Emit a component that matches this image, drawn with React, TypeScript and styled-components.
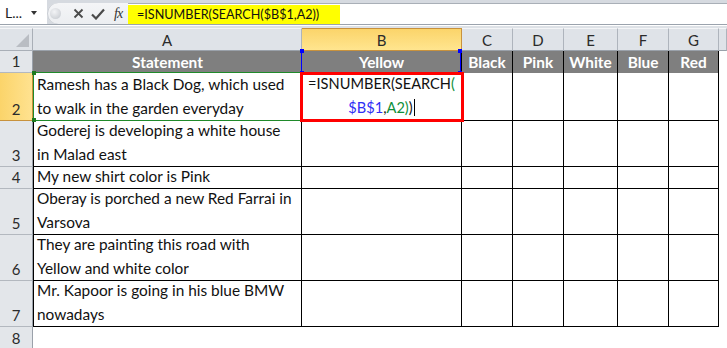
import styled, { createGlobalStyle } from "styled-components"

const GlobalStyle = createGlobalStyle`
  html, body {
    margin: 0;
    padding: 0;
    background: #ffffff;
  }
  body {
    width: 727px;
    height: 348px;
    overflow: hidden;
    font-family: Lato, "Open Sans", sans-serif;
  }
`

const Toolbar = styled.div`
  display: flex;
  height: 24px;
  background: #d6dae0;
  border-bottom: 1px solid #9ba3ad;
`

const ToolbarGap = styled.div`
  height: 2px;
  background: #dde1e6;
  border-top: 1px solid #ffffff;
`

const NameBox = styled.div`
  width: 47px;
  display: flex;
  align-items: center;
  justify-content: space-between;
  padding: 0 10px 0 5px;
  box-sizing: border-box;
  background: #ffffff;
  font-size: 14px;
  color: #1d1d1d;
`

const DropArrow = styled.span`
  width: 0;
  height: 0;
  border-left: 3px solid transparent;
  border-right: 3px solid transparent;
  border-top: 4px solid #333;
  margin-top: 2px;
`

const ButtonStrip = styled.div`
  width: 81px;
  margin-top: 3px;
  display: flex;
  align-items: center;
  background: linear-gradient(#f4f5f7, #eceef1);
  border-top-left-radius: 11px;
  border-bottom-left-radius: 11px;
  box-shadow: inset 1px 0 0 #c9cdd3;
`

const Grip = styled.span`
  width: 11px;
  height: 11px;
  margin: 0 8px 0 3px;
  border-radius: 50%;
  background: radial-gradient(circle at 40% 35%, #f3f4f6, #c2c6cc);
`

const ToolIcon = styled.span`
  width: 20px;
  display: flex;
  justify-content: center;
  align-items: center;
  color: #4a4a4a;
`

const FxLabel = styled.span`
  font-family: "Liberation Serif", serif;
  font-style: italic;
  font-size: 14px;
  color: #333;
  letter-spacing: -1px;
`

const FormulaField = styled.div`
  flex: 1;
  margin-top: 3px;
  display: flex;
  align-items: center;
  background: #ffffff;
  border-top: 1px solid #a9afb7;
`

const FormulaText = styled.span`
  background: #ffff00;
  height: 19px;
  line-height: 19px;
  padding: 0 21px 0 9px;
  font-size: 12.6px;
  color: #111;
`

const Sheet = styled.div`
  display: grid;
  grid-template-columns: 33px 269px 160px 51px 51px 54px 51px 50px 1fr;
  grid-template-rows: 23px 22px 48px 46px 22px 46px 46px 46px 1fr;
  height: 320px;
  font-size: 15.4px;
`

const CornerCell = styled.div`
  position: relative;
  background: #dfe3e8;
  border-right: 1px solid #a9afb7;
  border-bottom: 1px solid #a9afb7;
  border-top: 1px solid #f4f5f7;
  &::after {
    content: "";
    position: absolute;
    right: 3px;
    bottom: 3px;
    border-left: 13px solid transparent;
    border-bottom: 13px solid #b9bdc3;
  }
`

const ColHeader = styled.div<{ $selected?: boolean }>`
  display: flex;
  align-items: center;
  justify-content: center;
  font-size: 15px;
  border-top: 1px solid ${p => (p.$selected ? "#c8923d" : "#f4f5f7")};
  border-right: 1px solid ${p => (p.$selected ? "#c8923d" : "#aeb4bc")};
  border-bottom: 1px solid ${p => (p.$selected ? "#c8923d" : "#9aa1aa")};
  background: ${p => (p.$selected ? "linear-gradient(#fbd46a, #ffe58f)" : "#dfe3e8")};
  color: #2b2b2b;
`

const RowHeader = styled.div<{ $selected?: boolean }>`
  display: flex;
  align-items: flex-end;
  justify-content: center;
  font-size: 15px;
  line-height: 22px;
  border-right: 1px solid ${p => (p.$selected ? "#c8923d" : "#9aa1aa")};
  border-bottom: 1px solid ${p => (p.$selected ? "#c8923d" : "#b3b8bf")};
  background: ${p => (p.$selected ? "linear-gradient(90deg, #fbd46a, #ffe290)" : "#e3e6ea")};
  color: #2b2b2b;
`

const TitleCell = styled.div<{ $first?: boolean }>`
  position: relative;
  display: flex;
  align-items: center;
  justify-content: center;
  background: #7f7f7f;
  color: #ffffff;
  font-weight: 700;
  border-right: 1px solid #000;
  border-left: ${p => (p.$first ? "1px solid #7f7f7f" : "none")};
`

const DataCell = styled.div<{ $first?: boolean }>`
  position: relative;
  display: flex;
  flex-direction: column;
  justify-content: flex-end;
  align-items: flex-start;
  padding-left: 3px;
  line-height: 24px;
  white-space: nowrap;
  color: #111;
  border-right: 1px solid #000;
  border-bottom: 1px solid #000;
  border-left: ${p => (p.$first ? "1px solid #000" : "none")};
`

const FormulaCell = styled(DataCell)`
  align-items: center;
  padding-left: 0;
  font-size: 14.6px;
`

const OutsideCell = styled.div`
  background: #ffffff;
`

const EmptyRow = styled.div`
  grid-column: 2 / -1;
  background: #ffffff;
`

const ActiveFrame = styled.div`
  position: absolute;
  left: -2px;
  top: -1px;
  right: -3px;
  bottom: -2px;
  border: 3px solid #ff0000;
  z-index: 3;
  pointer-events: none;
`

const RangeFrame = styled.div<{ $color: string; $sides: "box" | "sides" }>`
  position: absolute;
  left: -1px;
  right: 0;
  top: ${p => (p.$sides === "box" ? "-1px" : "0")};
  bottom: ${p => (p.$sides === "box" ? "-1px" : "0")};
  border-left: 1px solid ${p => p.$color};
  border-right: 1px solid ${p => p.$color};
  border-top: ${p => (p.$sides === "box" ? `1px solid ${p.$color}` : "none")};
  border-bottom: ${p => (p.$sides === "box" ? `1px solid ${p.$color}` : "none")};
  z-index: 2;
  pointer-events: none;
`

const Handle = styled.span<{ $color: string; $x: "left" | "right"; $y: "top" | "bottom" }>`
  position: absolute;
  width: 4px;
  height: 4px;
  background: ${p => p.$color};
  ${p => (p.$x === "left" ? "left: -2px;" : "right: -2px;")}
  ${p => (p.$y === "top" ? "top: -2px;" : "bottom: -2px;")}
`

const Caret = styled.span`
  display: inline-block;
  width: 1px;
  height: 17px;
  margin-left: 1px;
  background: #000;
  vertical-align: -3px;
`

const Ref = styled.span<{ $tone: "blue" | "green" }>`
  color: ${p => (p.$tone === "blue" ? "#2f2ff5" : "#0f8f3a")};
`

const columns = ["A", "B", "C", "D", "E", "F", "G"]
const titles = ["Statement", "Yellow", "Black", "Pink", "White", "Blue", "Red"]

const statements: { row: number; lines: string[] }[] = [
  { row: 3, lines: ["Goderej is developing a white house", "in Malad east"] },
  { row: 4, lines: ["My new shirt color is Pink"] },
  { row: 5, lines: ["Oberay is porched a new Red Farrai in", "Varsova"] },
  { row: 6, lines: ["They are painting this road with", "Yellow and white color"] },
  { row: 7, lines: ["Mr. Kapoor is going in his blue BMW", "nowadays"] },
]

function Handles({ color }: { color: string }) {
  return (
    <>
      <Handle $color={color} $x="left" $y="top" />
      <Handle $color={color} $x="right" $y="top" />
      <Handle $color={color} $x="left" $y="bottom" />
      <Handle $color={color} $x="right" $y="bottom" />
    </>
  )
}

function EmptyCells() {
  return (
    <>
      {columns.slice(2).map(c => (
        <DataCell key={c} />
      ))}
      <OutsideCell />
    </>
  )
}

function RowGroup({ row, lines }: { row: number; lines: string[] }) {
  return (
    <>
      <RowHeader>{row}</RowHeader>
      <DataCell $first>
        {lines.map(l => (
          <span key={l}>{l}</span>
        ))}
      </DataCell>
      <DataCell />
      <EmptyCells />
    </>
  )
}

export default function App() {
  return (
    <>
      <GlobalStyle />
      <Toolbar>
        <NameBox>
          L...
          <DropArrow />
        </NameBox>
        <ButtonStrip>
          <Grip />
          <ToolIcon>
            <svg width="11" height="11" viewBox="0 0 11 11">
              <path d="M1.5 1.5 L9.5 9.5 M9.5 1.5 L1.5 9.5" stroke="#4a4a4a" strokeWidth="1.8" />
            </svg>
          </ToolIcon>
          <ToolIcon>
            <svg width="14" height="12" viewBox="0 0 14 12">
              <path d="M1 6.5 L5 10.5 L13 1.5" stroke="#4a4a4a" strokeWidth="2.2" fill="none" />
            </svg>
          </ToolIcon>
          <ToolIcon>
            <FxLabel>fx</FxLabel>
          </ToolIcon>
        </ButtonStrip>
        <FormulaField>
          <FormulaText>=ISNUMBER(SEARCH($B$1,A2))</FormulaText>
        </FormulaField>
      </Toolbar>
      <ToolbarGap />
      <Sheet>
        <CornerCell />
        {columns.map(c => (
          <ColHeader key={c} $selected={c === "B"}>
            {c}
          </ColHeader>
        ))}
        <ColHeader />

        <RowHeader>1</RowHeader>
        {titles.map((t, i) => (
          <TitleCell key={t} $first={i === 0}>
            {t}
            {i === 1 && (
              <RangeFrame $color="#0000ff" $sides="sides">
                <Handles color="#0000ff" />
              </RangeFrame>
            )}
          </TitleCell>
        ))}
        <OutsideCell />

        <RowHeader $selected>2</RowHeader>
        <DataCell $first>
          <span>Ramesh has a Black Dog, which used</span>
          <span>to walk in the garden everyday</span>
          <RangeFrame $color="#1f8a2a" $sides="box">
            <Handle $color="#1f7a1f" $x="left" $y="top" />
            <Handle $color="#1f7a1f" $x="left" $y="bottom" />
          </RangeFrame>
        </DataCell>
        <FormulaCell>
          <span>
            =ISNUMBER(SEARCH<Ref $tone="green">(</Ref>
          </span>
          <span>
            <Ref $tone="blue">$B$1</Ref>,<Ref $tone="green">A2)</Ref>)
            <Caret />
          </span>
          <ActiveFrame />
        </FormulaCell>
        <EmptyCells />

        {statements.map(s => (
          <RowGroup key={s.row} row={s.row} lines={s.lines} />
        ))}

        <RowHeader>8</RowHeader>
        <EmptyRow />
      </Sheet>
    </>
  )
}
